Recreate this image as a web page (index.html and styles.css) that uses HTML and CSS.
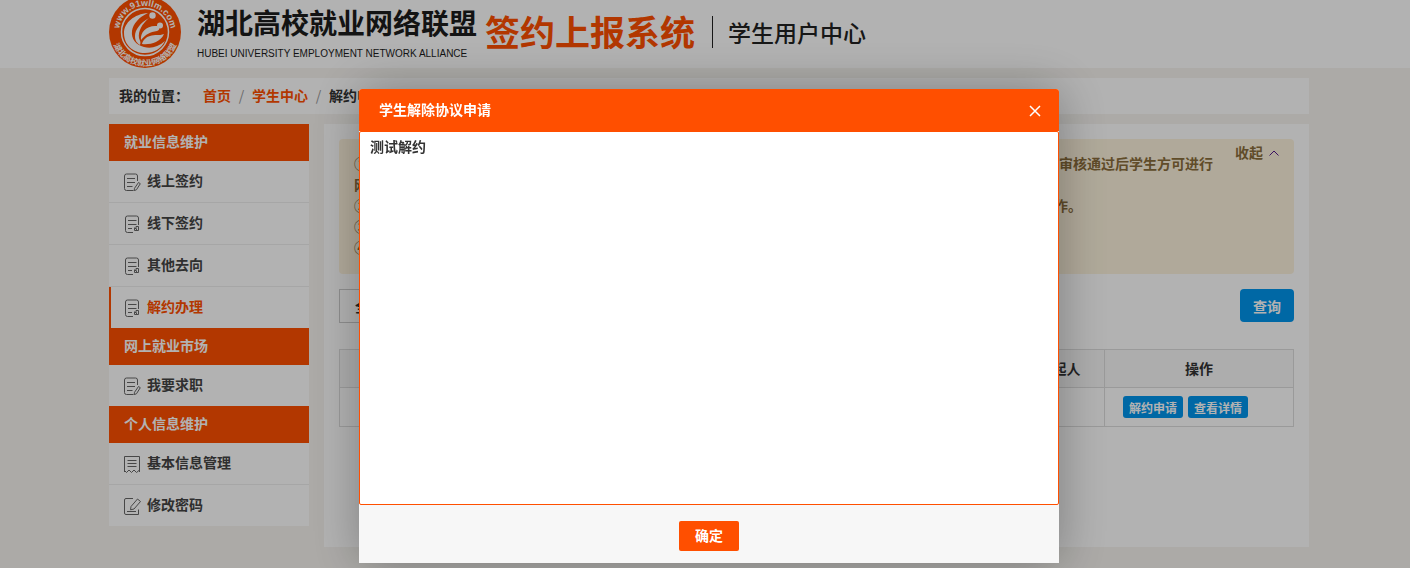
FILE: index.html
```html
<!DOCTYPE html>
<html lang="zh-CN">
<head>
    <meta charset="utf-8">
    <title>解约办理 - 学生用户中心</title>
    <link rel="stylesheet" href="styles.css">
</head>
<body>
<!-- icons shared by the side menu -->
<svg class="sprite" aria-hidden="true">
    <symbol id="icon-edit-doc" viewBox="0 0 18 18">
        <path d="M13.500 8V3a2 2 0 0 0-2-2h-9a2 2 0 0 0-2 2v12.500a2 2 0 0 0 2 2h7M3 5.500h8M3 9.500h8M3 13.500h5.500"/>
        <path d="M14.500 9.500l1.800 1.200-3.800 6-2.300 1 .3-2.400z"/>
    </symbol>
    <symbol id="icon-doc" viewBox="0 0 18 18">
        <path d="M14.500 10V3a2 2 0 0 0-2-2h-9a2 2 0 0 0-2 2v12.500a2 2 0 0 0 2 2h5.500M4 5.500h8.500M4 9.500h8.500M4 13.500h4"/>
        <path d="M10.500 12.500v3h4v-4h-2.500v2h-1.500M12.500 13.500v1.500"/>
    </symbol>
    <symbol id="icon-receipt" viewBox="0 0 18 18">
        <path d="M.5 17V1.500h15V17M3.500 5.500h9M3.500 8.500h9M3.500 11.500h9M.5 15.500l2 2 2.500-2.500 2.500 2.500 2.500-2.500 2.500 2.500 3-2.500"/>
    </symbol>
    <symbol id="icon-edit" viewBox="0 0 18 18">
        <path d="M9 1.500H2a1.500 1.500 0 0 0-1.500 1.500v13A1.500 1.500 0 0 0 2 17.500h12.500v-5M3 14.500h9"/>
        <path d="M13.500 2l3 2.500-6.500 7.500-3.500.8.500-3.300z"/>
    </symbol>
</svg>

<header class="header">
    <div class="container header-inner">
        <svg class="logo" viewBox="0 0 72 72" aria-label="湖北高校就业网络联盟">
            <defs>
                <path id="arc-top" d="M10 36a26 26 0 0 1 52 0"/>
                <path id="arc-bottom" d="M2 36a34 34 0 0 0 68 0"/>
            </defs>
            <circle cx="36" cy="36" r="36" fill="#ff4f00"/>
            <circle cx="36" cy="36" r="23.500" fill="none" stroke="#fff" stroke-width="1.500"/>
            <text class="ring-text ring-url" text-anchor="middle"><textPath href="#arc-top" startOffset="50%">www.91wllm.com</textPath></text>
            <text class="ring-text" text-anchor="middle"><textPath href="#arc-bottom" startOffset="50%">湖北高校就业网络联盟</textPath></text>
            <circle cx="43.500" cy="19.500" r="3.200" fill="#fff"/>
            <circle cx="51" cy="29.500" r="3" fill="#fff"/>
            <g fill="#fff">
                <path d="M39 17C25 18 15 27 15 37c0 12 9 20 21 20 9 0 16-4 20-12-7 6-14 8-21 6-8-2-13-8-12-16 1-7 7-14 16-18z"/>
                <path d="M40 22c-9 5-14 12-14 18 0 5 2 7 5 9 1-3 0-4-1-7-1-7 3-14 10-20z"/>
                <path d="M48 30c-10-1-17 6-16 14 5-6 9-8 16-9 3-1 3-4 0-5z"/>
                <path d="M55 38c-5 2-9 0-14 2-4 1-7 4-8 8 7 1 18-1 22-10z"/>
            </g>
        </svg>
        <div class="brand">
            <span class="brand-name">湖北高校就业网络联盟</span>
            <span class="brand-en">HUBEI UNIVERSITY EMPLOYMENT NETWORK ALLIANCE</span>
        </div>
        <h1 class="system-name">签约上报系统</h1>
        <span class="center-name">学生用户中心</span>
    </div>
</header>

<div class="container">
    <nav class="breadcrumb">
        <span class="breadcrumb-label">我的位置&#xFF1A;</span>
        <a href="#">首页</a><i>/</i><a href="#">学生中心</a><i>/</i><span>解约申请</span>
    </nav>

    <div class="layout">
        <nav class="sidebar">
            <h2>就业信息维护</h2>
            <ul>
                <li><a href="#"><svg><use href="#icon-edit-doc"/></svg>线上签约</a></li>
                <li><a href="#"><svg><use href="#icon-doc"/></svg>线下签约</a></li>
                <li><a href="#"><svg><use href="#icon-doc"/></svg>其他去向</a></li>
                <li class="active"><a href="#"><svg><use href="#icon-doc"/></svg>解约办理</a></li>
            </ul>
            <h2>网上就业市场</h2>
            <ul>
                <li><a href="#"><svg><use href="#icon-edit-doc"/></svg>我要求职</a></li>
            </ul>
            <h2>个人信息维护</h2>
            <ul>
                <li><a href="#"><svg><use href="#icon-receipt"/></svg>基本信息管理</a></li>
                <li><a href="#"><svg><use href="#icon-edit"/></svg>修改密码</a></li>
            </ul>
        </nav>

        <main class="main">
            <div class="notice">
                <div class="notice-text">
                    <p>①2023届毕业生如需与用人单位解除就业协议&#xFF0C;应先与用人单位协商一致并提交解约申请&#xFF0C;待用人单位及所在学校审核通过后学生方可进行网上签约。</p>
                    <p>②用人单位发起的解约申请&#xFF0C;学生可在列表中查看详情并选择同意或拒绝&#xFF0C;处理完成后双方才能继续进行后续的操作。</p>
                    <p>③解约申请提交后请及时关注审核进度。</p>
                    <p>④如有疑问请联系学校就业部门。</p>
                </div>
                <button type="button" class="notice-toggle">收起
                    <svg viewBox="0 0 10 6"><path d="M.5 5.500L5 1l4.500 4.500"/></svg>
                </button>
            </div>

            <form class="search">
                <select aria-label="状态">
                    <option>全部状态</option>
                </select>
                <button type="button" class="btn">查询</button>
            </form>

            <table class="list">
                <thead>
                <tr>
                    <th>单位名称</th>
                    <th>申请时间</th>
                    <th>状态</th>
                    <th class="col-from">发起人</th>
                    <th class="col-action">操作</th>
                </tr>
                </thead>
                <tbody>
                <tr>
                    <td></td>
                    <td></td>
                    <td></td>
                    <td></td>
                    <td>
                        <div class="actions">
                            <button type="button" class="btn btn-small">解约申请</button>
                            <button type="button" class="btn btn-small">查看详情</button>
                        </div>
                    </td>
                </tr>
                </tbody>
            </table>
        </main>
    </div>
</div>

<div class="shade">
    <div class="modal" role="dialog" aria-labelledby="modal-title">
        <div class="modal-header">
            <h2 id="modal-title">学生解除协议申请</h2>
            <button type="button" class="modal-close" aria-label="关闭">
                <svg viewBox="0 0 12 12"><path d="M1 1l10 10M11 1L1 11"/></svg>
            </button>
        </div>
        <textarea class="modal-text" aria-labelledby="modal-title">测试解约</textarea>
        <div class="modal-footer">
            <button type="button" class="modal-ok">确定</button>
        </div>
    </div>
</div>
</body>
</html>
```
FILE: styles.css
```css
* {
  box-sizing: border-box;
}
body {
  margin: 0;
  padding-left: 8px;
  background: #f6f4f0;
  color: #333;
  font: 700 14px/21px "Noto Sans CJK SC", sans-serif;
}
h1, h2, p, ul {
  margin: 0;
  padding: 0;
}
ul {
  list-style: none;
}
a {
  color: #ff4f00;
  text-decoration: none;
}
button, select, textarea {
  font: inherit;
}
button {
  border: none;
  cursor: pointer;
}
svg {
  flex: none;
}
.sprite {
  display: none;
}
.container {
  max-width: 1200px;
  margin: 0 auto;
}

/* header */
.header {
  margin-left: -8px;
  padding-left: 8px;
  background: #fff;
}
.header-inner {
  display: flex;
  align-items: flex-end;
  height: 68px;
}
.logo {
  width: 72px;
  height: 72px;
}
.ring-text {
  fill: #fff;
  font-size: 8px;
  font-weight: 700;
}
.ring-url {
  font-family: "Liberation Sans", sans-serif;
  font-size: 9px;
}
.brand {
  display: flex;
  flex-direction: column;
  gap: 4px;
  width: 280px;
  margin-left: 16px;
  padding-bottom: 6px;
  color: #1c1c1c;
  white-space: nowrap;
}
.brand-name {
  font-size: 28px;
  line-height: 40px;
}
.brand-en {
  font: 10px/16px "Liberation Sans", sans-serif;
}
.system-name {
  margin-left: 8px;
  padding-bottom: 13px;
  color: #ff4f00;
  font-size: 35px;
  font-weight: 700;
  line-height: 48px;
}
.center-name {
  margin: 0 0 20px 17px;
  padding-left: 15px;
  border-left: 1px solid #222;
  color: #222;
  font-size: 23px;
  font-weight: 500;
  line-height: 32px;
}

/* breadcrumb */
.breadcrumb {
  display: flex;
  margin: 10px 0;
  padding: 7px 10px 8px;
  background: #fff;
}
.breadcrumb-label {
  margin-right: 14px;
}
.breadcrumb i {
  width: 21px;
  color: #999;
  font-style: normal;
  font-weight: 400;
  text-align: center;
}

/* side menu */
.layout {
  display: flex;
  align-items: flex-start;
  gap: 15px;
}
.sidebar {
  width: 200px;
  background: #fff;
}
.sidebar h2 {
  padding: 7px 15px 9px;
  background: #ff4f00;
  color: #fff;
  font-size: 14px;
}
.sidebar li + li {
  border-top: 1px solid #eee;
}
.sidebar a {
  display: flex;
  align-items: center;
  gap: 5px;
  padding: 9px 15px 11px;
  color: #444;
}
.sidebar .active a {
  padding-left: 13px;
  border-left: 2px solid #ff4f00;
  color: #ff4f00;
}
.sidebar svg {
  width: 18px;
  height: 18px;
  margin-top: 3px;
  fill: none;
  stroke: #666;
}

/* main panel */
.main {
  flex: 1;
  padding: 15px 15px 120px;
  background: #fff;
}
.notice {
  display: flex;
  align-items: flex-start;
  justify-content: space-between;
  padding: 14px 15px 16px;
  border-radius: 4px;
  background: #fdf3dd;
  color: #8a6d3b;
}
.notice-text {
  width: 865px;
}
.notice-toggle {
  display: flex;
  align-items: center;
  gap: 6px;
  margin-top: -11px;
  padding: 0;
  background: none;
  color: inherit;
}
.notice-toggle svg {
  width: 10px;
  height: 6px;
  fill: none;
  stroke: #551a8b;
}
.search {
  display: flex;
  justify-content: space-between;
  margin: 15px 0 26px;
}
.search select {
  width: 200px;
  height: 34px;
  padding: 0 15px;
  border: 1px solid #ccc;
  background: #fff;
  color: #333;
  appearance: none;
}
.btn {
  height: 33px;
  padding: 0 13px;
  border-radius: 4px;
  background: #0095ed;
  color: #fff;
  line-height: 32px;
}
.btn-small {
  height: 22px;
  padding: 0 6px;
  border-radius: 3px;
  font-size: 12px;
  line-height: 21px;
}
.list {
  width: 100%;
  border-collapse: collapse;
  table-layout: fixed;
}
.list th, .list td {
  height: 39px;
  padding: 0;
  border: 1px solid #ddd;
}
.list th {
  height: 38px;
  background: #f8f8f8;
}
.col-from {
  width: 90px;
}
.col-action {
  width: 189px;
}
.actions {
  display: flex;
  gap: 5px;
  padding-left: 18px;
}

/* dialog */
.shade {
  position: fixed;
  inset: 0;
  display: flex;
  align-items: flex-start;
  justify-content: center;
  padding: 89px 0 0 8px;
  background: rgba(0, 0, 0, .3);
}
.modal {
  width: 700px;
  border-radius: 3px 3px 0 0;
  background: #f7f7f7;
  box-shadow: 1px 1px 50px rgba(0, 0, 0, .3);
}
.modal-header {
  display: flex;
  align-items: center;
  justify-content: space-between;
  height: 42px;
  padding: 0 18px 0 20px;
  border-radius: 3px 3px 0 0;
  background: #ff4f00;
  color: #fff;
}
.modal-header h2 {
  padding-bottom: 1px;
  font-size: 14px;
}
.modal-close {
  display: flex;
  padding: 2px 0 0;
  background: none;
}
.modal-close svg {
  width: 12px;
  height: 12px;
  fill: none;
  stroke: #fff;
  stroke-width: 1.5;
}
.modal-text {
  display: block;
  width: 100%;
  height: 374px;
  padding: 4px 10px;
  border: 1px solid #ff4f00;
  border-radius: 2px;
  background: #fff;
  color: #333;
  outline: none;
  resize: none;
}
.modal-footer {
  padding: 16px 0 12px;
  text-align: center;
}
.modal-ok {
  width: 60px;
  height: 30px;
  padding: 0 0 2px;
  border-radius: 2px;
  background: #ff4f00;
  color: #fff;
  vertical-align: top;
}
```
